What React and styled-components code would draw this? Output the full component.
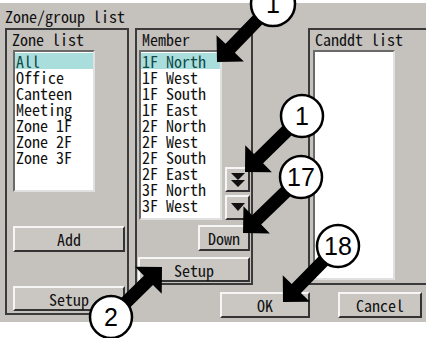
import React from 'react'
import styled, { createGlobalStyle } from 'styled-components'

const GlobalStyle = createGlobalStyle`
  html, body { margin: 0; padding: 0; background: #fff; }
  body { font-family: "Noto Sans Mono CJK JP", "DejaVu Sans Mono", monospace; }
`

const Page = styled.div`
  position: relative;
  width: 426px;
  height: 338px;
  overflow: hidden;
`

const Screen = styled.div`
  margin-top: 3px;
  height: 319px;
  background: #c5c2be;
  padding-left: 5px;
  box-sizing: border-box;
  color: #111;
  font-size: 16px;
  line-height: 16px;
`

const Heading = styled.div`
  height: 25px;
  padding-top: 5px;
  box-sizing: border-box;
`

const Body = styled.div`
  display: grid;
  grid-template-columns: 124px 118px 1fr;
  grid-template-rows: 257px 30px;
  column-gap: 6px;
  grid-template-areas:
    "zone member cand"
    "zone foot foot";
`

const GroupBox = styled.div`
  grid-area: ${p => p.area};
  display: flex;
  flex-direction: column;
  border: 2px solid #3b3b3b;
  padding-top: 1px;
  box-sizing: border-box;
  ${p => p.area === 'cand' && 'margin-left: 49px; width: 130px;'}
`

const Label = styled.div`
  padding-left: 5px;
  height: 16px;
`

const ListBox = styled.div`
  width: ${p => p.w}px;
  height: ${p => p.h}px;
  margin-top: 3px;
  margin-left: ${p => p.ml}px;
  background: #fff;
  border: 2px solid;
  border-color: #6a6a6a #e0e0e0 #e0e0e0 #6a6a6a;
  padding-top: 1px;
  box-sizing: border-box;
  flex-shrink: 0;
`

const Row = styled.div`
  height: 16px;
  padding-left: 1px;
  white-space: pre;
  background: ${p => (p.selected ? '#a9dedd' : 'transparent')};
  color: ${p => (p.selected ? '#114a48' : '#111')};
`

const Button = styled.button`
  display: block;
  width: ${p => p.w}px;
  height: ${p => p.h || 26}px;
  margin: 0;
  padding: 0;
  font: inherit;
  color: #111;
  background: #cac7c3;
  border: 2px solid;
  border-color: #f6f6f6 #333 #333 #f6f6f6;
  box-sizing: border-box;
  flex-shrink: 0;
`

const ZoneButton = styled(Button)`
  margin-left: 6px;
  margin-top: 34px;
`

const MemberRow = styled.div`
  display: flex;
  align-items: flex-end;
`

const ScrollCol = styled.div`
  display: flex;
  flex-direction: column;
  gap: 3px;
  margin-left: 3px;
`

const ScrollButton = styled(Button)`
  display: flex;
  align-items: center;
  justify-content: center;
`

const DownButton = styled(Button)`
  align-self: flex-end;
  margin: 5px 1px 0 0;
`

const MemberSetup = styled(Button)`
  margin: 6px 0 0 1px;
`

const Footer = styled.div`
  grid-area: foot;
  display: flex;
  padding-top: 7px;
`

const FootButton = styled(Button)`
  margin-left: ${p => p.ml}px;
`

const Overlay = styled.svg`
  position: absolute;
  left: 0;
  top: 0;
  pointer-events: none;
`

const zones = ['All', 'Office', 'Canteen', 'Meeting', 'Zone 1F', 'Zone 2F', 'Zone 3F']
const members = ['1F North', '1F West', '1F South', '1F East', '2F North', '2F West', '2F South', '2F East', '3F North', '3F West']

const callouts = [
  { cx: 273, cy: 4, r: 22, n: '1', tip: [217, 62] },
  { cx: 302, cy: 116, r: 21, n: '1', tip: [245, 172] },
  { cx: 301, cy: 177, r: 21, n: '17', tip: [243, 233] },
  { cx: 338, cy: 246, r: 21, n: '18', tip: [283, 302] },
  { cx: 111, cy: 317, r: 21, n: '2', tip: [162, 267] },
]

function arrowPoints(x1, y1, x2, y2, w = 13, L = 19, H = 19) {
  const dx = x2 - x1
  const dy = y2 - y1
  const len = Math.hypot(dx, dy)
  const ux = dx / len
  const uy = dy / len
  const nx = -uy
  const ny = ux
  const bx = x2 - ux * L
  const by = y2 - uy * L
  const pts = [
    [x1 + nx * w / 2, y1 + ny * w / 2],
    [bx + nx * w / 2, by + ny * w / 2],
    [bx + nx * H, by + ny * H],
    [x2, y2],
    [bx - nx * H, by - ny * H],
    [bx - nx * w / 2, by - ny * w / 2],
    [x1 - nx * w / 2, y1 - ny * w / 2],
  ]
  return pts.map(p => p.join(',')).join(' ')
}

const DoubleDown = () => (
  <svg width="16" height="16" viewBox="0 0 16 16">
    <path d="M1 1h14L8 8z M1 8h14L8 15z" fill="#111" />
  </svg>
)

const SingleDown = () => (
  <svg width="16" height="16" viewBox="0 0 16 16">
    <path d="M1 3h14L8 11z" fill="#111" />
  </svg>
)

const App = () => {
  return (
    <Page>
      <GlobalStyle />
      <Screen>
        <Heading>Zone/group list</Heading>
        <Body>
          <GroupBox area="zone">
            <Label>Zone list</Label>
            <ListBox w={82} h={142} ml={6}>
              {zones.map((z, i) => (
                <Row key={z} selected={i === 0}>{z}</Row>
              ))}
            </ListBox>
            <ZoneButton w={112}>Add</ZoneButton>
            <ZoneButton w={112} h={25}>Setup</ZoneButton>
          </GroupBox>

          <GroupBox area="member">
            <Label>Member</Label>
            <MemberRow>
              <ListBox w={83} h={170} ml={2}>
                {members.map((m, i) => (
                  <Row key={m} selected={i === 0}>{m}</Row>
                ))}
              </ListBox>
              <ScrollCol>
                <ScrollButton w={25} h={25}><DoubleDown /></ScrollButton>
                <ScrollButton w={25} h={25}><SingleDown /></ScrollButton>
              </ScrollCol>
            </MemberRow>
            <DownButton w={52}>Down</DownButton>
            <MemberSetup w={112} h={25}>Setup</MemberSetup>
          </GroupBox>

          <GroupBox area="cand">
            <Label>Canddt list</Label>
            <ListBox w={82} h={230} ml={3} />
          </GroupBox>

          <Footer>
            <FootButton w={90} ml={85}>OK</FootButton>
            <FootButton w={84} ml={28}>Cancel</FootButton>
          </Footer>
        </Body>
      </Screen>

      <Overlay width="426" height="338" viewBox="0 0 426 338">
        {callouts.map((c, i) => (
          <polygon key={'a' + i} points={arrowPoints(c.cx, c.cy, c.tip[0], c.tip[1])} fill="#000" />
        ))}
        {callouts.map((c, i) => (
          <g key={'c' + i}>
            <circle cx={c.cx} cy={c.cy} r={c.r} fill="#fff" stroke="#000" strokeWidth="2.5" />
            <text
              x={c.cx}
              y={c.cy + 9}
              textAnchor="middle"
              fontFamily='"Liberation Sans", Arial, sans-serif'
              fontSize="25"
              fill="#000"
            >
              {c.n}
            </text>
          </g>
        ))}
      </Overlay>
    </Page>
  )
}

export default App
